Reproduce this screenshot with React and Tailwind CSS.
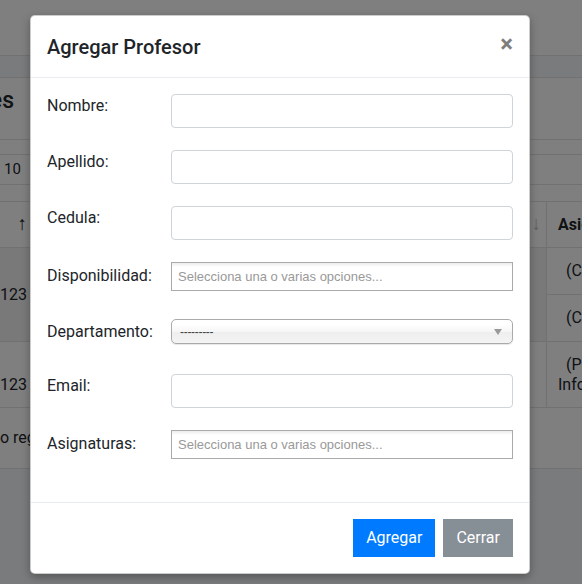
export default function App() {
  const rows = [
    { label: "Nombre:", type: "input" },
    { label: "Apellido:", type: "input" },
    { label: "Cedula:", type: "input" },
    { label: "Disponibilidad:", type: "multi" },
    { label: "Departamento:", type: "single" },
    { label: "Email:", type: "input" },
    { label: "Asignaturas:", type: "multi" },
  ];

  return (
    <div className="relative w-[582px] h-[584px] overflow-hidden bg-[#f4f6f9] font-['Roboto',sans-serif] text-[#212529]">
      {/* Background page */}
      <div className="h-[56px] bg-white border-b border-[#dee2e6]" />
      <div className="h-[21px] bg-[#f4f6f9]" />
      <div className="bg-white border-t border-[#dee2e6]">
        <div className="h-[62px] border-b border-[#dee2e6] pt-[8px]">
          <div className="w-[14px] flex justify-end whitespace-nowrap text-[23px] leading-[30px] font-medium">
            Profesores
          </div>
        </div>
        <div className="h-[15px] border-b border-[#dee2e6]" />
        <div className="h-[30px] border-b border-[#dee2e6] flex items-center">
          <span className="pl-[4px] text-[15px]">10</span>
        </div>
        <div className="h-[16px]" />
        {/* table */}
        <div className="border-t border-[#dee2e6]">
          <div className="h-[46px] border-b border-[#dee2e6] flex">
            <div className="w-[30px] flex items-center justify-end pr-[3px] text-[19px] text-[#212529]">↑</div>
            <div className="flex-1 flex items-center justify-end pr-[5px] text-[19px] text-[#212529]">
              <span className="opacity-30">↑</span>
              <span className="opacity-30">↓</span>
            </div>
            <div className="w-[36px] border-l border-[#dee2e6] flex items-center pl-[11px] font-bold text-[16px] whitespace-nowrap overflow-hidden">
              Asignaturas
            </div>
          </div>
          <div className="h-[94px] border-b border-[#dee2e6] flex">
            <div className="flex-1 bg-[#f2f2f2] flex items-center text-[16px]">123</div>
            <div className="w-[36px] border-l border-[#dee2e6] flex flex-col text-[16px] whitespace-nowrap overflow-hidden">
              <div className="h-[47px] border-b border-[#dee2e6] flex items-center pl-[19px]">(CI-101)</div>
              <div className="flex-1 flex items-center pl-[19px]">(CI-102)</div>
            </div>
          </div>
          <div className="h-[66px] border-b border-[#dee2e6] flex">
            <div className="flex-1 flex items-center text-[16px] pt-[20px]">123</div>
            <div className="w-[36px] border-l border-[#dee2e6] flex flex-col justify-center text-[16px] leading-[20px] whitespace-nowrap overflow-hidden">
              <div className="pl-[19px]">(PS-201)</div>
              <div className="pl-[11px]">Informática</div>
            </div>
          </div>
          <div className="h-[61px] border-b border-[#dee2e6] flex items-center">
            <span className="text-[16px] whitespace-nowrap">o registros</span>
          </div>
        </div>
      </div>

      {/* Backdrop */}
      <div className="absolute inset-0 bg-black/50" />

      {/* Modal */}
      <div className="absolute left-[30px] top-[15px] w-[500px] bg-white rounded-[5px] border border-black/20 shadow-[0_3px_9px_rgba(0,0,0,0.3)] flex flex-col">
        <div className="h-[62px] border-b border-[#e9ecef] flex items-start justify-between pt-[16px] px-[16px]">
          <h5 className="text-[20px] leading-[30px] font-medium text-[#212529]">Agregar Profesor</h5>
          <div className="text-[24px] leading-[24px] font-bold text-black opacity-50">×</div>
        </div>
        <div className="p-[16px] flex flex-col">
          {rows.map((r) => (
            <div key={r.label} className="h-[56px] flex items-start">
              <label
                className={
                  "w-[124px] text-[16px] leading-[24px] text-[#212529] " +
                  (r.type === "input" ? "mt-0" : "mt-[2px]")
                }
              >
                {r.label}
              </label>
              {r.type === "input" && (
                <div className="flex-1 h-[34px] border border-[#ced4da] rounded-[4px] bg-white" />
              )}
              {r.type === "multi" && (
                <div className="flex-1 h-[29px] border border-[#aaa] bg-[linear-gradient(#eee_1%,#fff_15%)] flex items-center pl-[6px] font-['Liberation_Sans',Arial,sans-serif] text-[13px] text-[#999]">
                  Selecciona una o varias opciones...
                </div>
              )}
              {r.type === "single" && (
                <div className="flex-1 mt-[1px] h-[25px] border border-[#aaa] rounded-[5px] bg-[linear-gradient(#fff_20%,#f6f6f6_50%,#eee_52%,#f4f4f4_100%)] shadow-[0_1px_1px_rgba(0,0,0,0.1)] flex items-center justify-between pl-[8px] pr-[10px] font-['Liberation_Sans',Arial,sans-serif] text-[12px] text-[#444]">
                  <span className="tracking-[-0.3px]">---------</span>
                  <svg width="8" height="6" viewBox="0 0 8 6">
                    <path d="M0 0 L8 0 L4 6 Z" fill="#999" />
                  </svg>
                </div>
              )}
            </div>
          ))}
        </div>
        <div className="border-t border-[#e9ecef] p-[12px] flex justify-end">
          <button className="m-[4px] h-[38px] px-[13px] bg-[#007bff] text-white text-[16px] leading-[24px]">Agregar</button>
          <button className="m-[4px] h-[38px] px-[13px] bg-[#868e96] text-white text-[16px] leading-[24px]">Cerrar</button>
        </div>
      </div>
    </div>
  );
}
